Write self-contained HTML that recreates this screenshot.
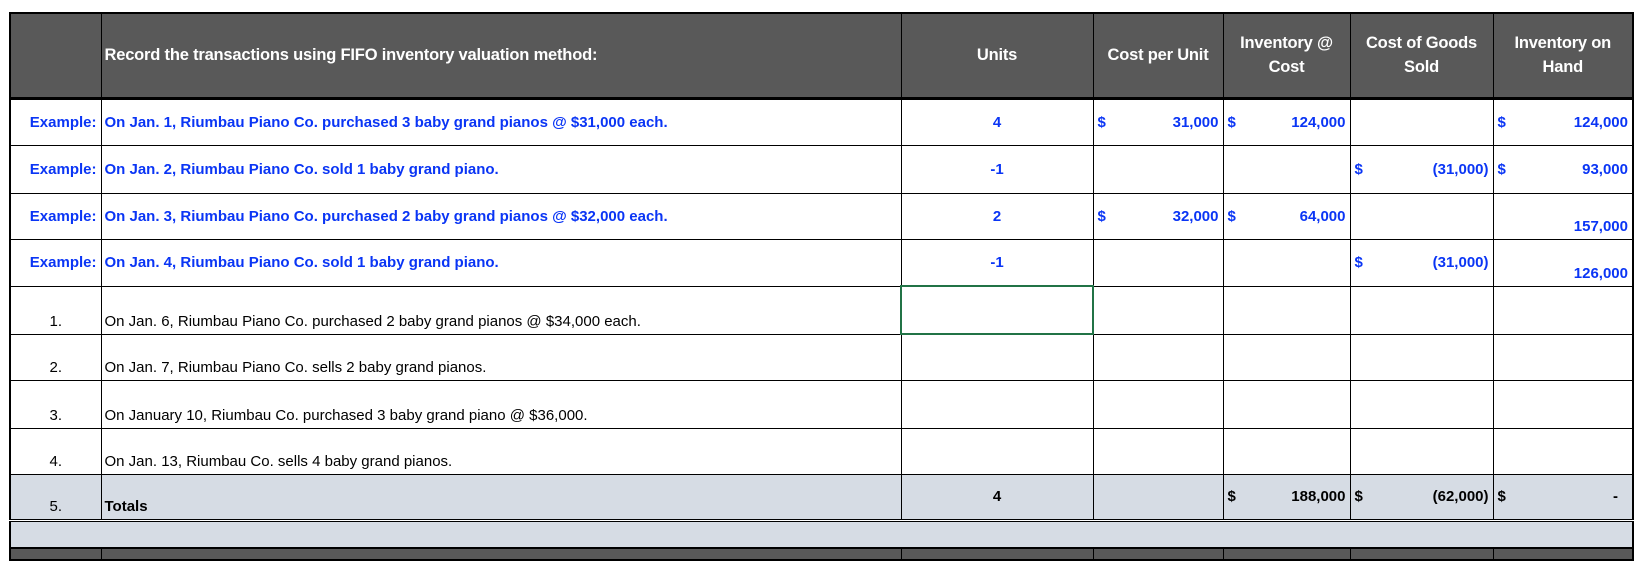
<!DOCTYPE html>
<html><head><meta charset="utf-8"><style>
*{margin:0;padding:0;box-sizing:border-box}
body{width:1636px;height:554px;background:#fff;position:relative;overflow:hidden;font-family:"Liberation Sans",Arial,sans-serif;font-size:15px}
table{position:absolute;left:9px;top:12px;border-collapse:collapse;table-layout:fixed;border:2px solid #000}
td{border:1px solid #000;padding:0 4px;white-space:nowrap;overflow:hidden}
td:nth-child(2){padding-left:3px}
.h td{background:#595959;color:#fff;font-weight:bold;text-align:center;border-bottom:3px solid #000;line-height:24px;font-size:16.5px;letter-spacing:-0.2px}
.b{color:#0a35f5;font-weight:bold}
.c{text-align:center}
.r{text-align:right}
.bot{vertical-align:bottom;padding-bottom:4px}
.m{display:flex;justify-content:space-between}
.tot td{background:#d6dce4;font-weight:bold}
.tot td:first-child{font-weight:normal}
.g td{background:#d6dce4;border-top:3px double #000}
.d td{background:#595959;border-top:2px solid #000}
</style></head><body>
<table>
<colgroup><col style="width:91px"><col style="width:800px"><col style="width:192px"><col style="width:130px"><col style="width:127px"><col style="width:143px"><col style="width:140px"></colgroup>
<tr class="h" style="height:85px"><td></td><td style="text-align:left">Record the transactions using FIFO inventory valuation method:</td><td>Units</td><td>Cost per Unit</td><td>Inventory @<br>Cost</td><td>Cost of Goods<br>Sold</td><td>Inventory on<br>Hand</td></tr>
<tr class="b" style="height:47px"><td class="r">Example:</td><td>On Jan. 1, Riumbau Piano Co. purchased 3 baby grand pianos @ $31,000 each.</td><td class="c">4</td><td><div class="m"><span>$</span><span>31,000</span></div></td><td><div class="m"><span>$</span><span>124,000</span></div></td><td></td><td><div class="m"><span>$</span><span>124,000</span></div></td></tr>
<tr class="b" style="height:48px"><td class="r">Example:</td><td>On Jan. 2, Riumbau Piano Co. sold 1 baby grand piano.</td><td class="c">-1</td><td></td><td></td><td><div class="m"><span>$</span><span>(31,000)</span></div></td><td><div class="m"><span>$</span><span>93,000</span></div></td></tr>
<tr class="b" style="height:46px"><td class="r">Example:</td><td>On Jan. 3, Riumbau Piano Co. purchased 2 baby grand pianos @ $32,000 each.</td><td class="c">2</td><td><div class="m"><span>$</span><span>32,000</span></div></td><td><div class="m"><span>$</span><span>64,000</span></div></td><td></td><td class="r bot">157,000</td></tr>
<tr class="b" style="height:47px"><td class="r">Example:</td><td>On Jan. 4, Riumbau Piano Co. sold 1 baby grand piano.</td><td class="c">-1</td><td></td><td></td><td><div class="m"><span>$</span><span>(31,000)</span></div></td><td class="r bot">126,000</td></tr>
<tr style="height:48px"><td class="c bot">1.</td><td class="bot">On Jan. 6, Riumbau Piano Co. purchased 2 baby grand pianos @ $34,000 each.</td><td style="border:2px solid #217346"></td><td></td><td></td><td></td><td></td></tr>
<tr style="height:46px"><td class="c bot">2.</td><td class="bot">On Jan. 7, Riumbau Piano Co. sells 2 baby grand pianos.</td><td></td><td></td><td></td><td></td><td></td></tr>
<tr style="height:48px"><td class="c bot">3.</td><td class="bot">On January 10, Riumbau Co. purchased 3 baby grand piano @ $36,000.</td><td></td><td></td><td></td><td></td><td></td></tr>
<tr style="height:46px"><td class="c bot">4.</td><td class="bot">On Jan. 13, Riumbau Co. sells 4 baby grand pianos.</td><td></td><td></td><td></td><td></td><td></td></tr>
<tr class="tot" style="height:46px"><td class="c bot">5.</td><td class="bot">Totals</td><td class="c">4</td><td></td><td><div class="m"><span>$</span><span>188,000</span></div></td><td><div class="m"><span>$</span><span>(62,000)</span></div></td><td><div class="m"><span>$</span><span style="padding-right:10px">-</span></div></td></tr>
<tr class="g" style="height:28px"><td colspan="7"></td></tr>
<tr class="d" style="height:12px"><td></td><td></td><td></td><td></td><td></td><td></td><td></td></tr>
</table>
</body></html>
